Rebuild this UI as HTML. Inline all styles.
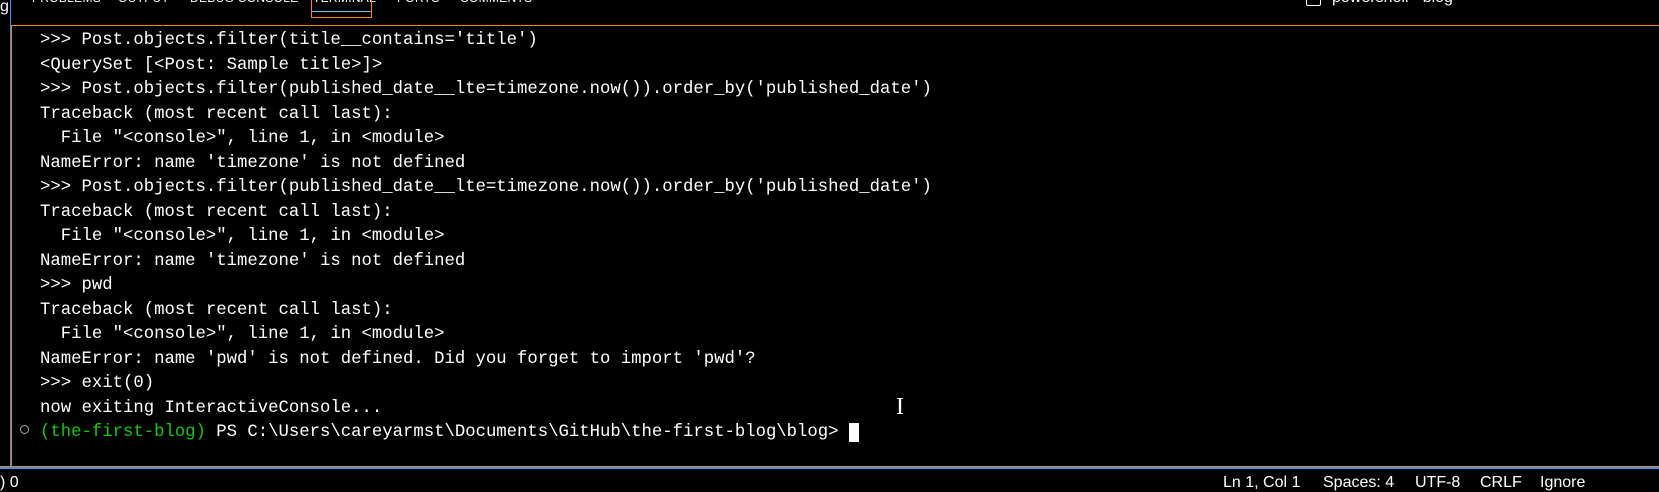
<!DOCTYPE html>
<html><head><style>
body{margin:0;width:1659px;height:484px;background:#000;overflow:hidden;position:relative;font-family:"Liberation Mono",monospace;}
.t{position:absolute;left:40px;top:29px;color:#fff;font-size:17.3px;line-height:24.5px;white-space:pre;}
.tab{position:absolute;top:-9px;color:#fff;font-family:"Liberation Sans",sans-serif;font-size:12px;letter-spacing:0.3px;}
.sb{position:absolute;top:474px;color:#fff;font-family:"Liberation Sans",sans-serif;font-size:16px;white-space:pre;}
</style></head><body>
<div class="tab" style="left:32px">PROBLEMS</div>
<div class="tab" style="left:118px">OUTPUT</div>
<div class="tab" style="left:190px">DEBUG CONSOLE</div>
<div class="tab" style="left:313px">TERMINAL</div>
<div class="tab" style="left:397px">PORTS</div>
<div class="tab" style="left:460px">COMMENTS</div>
<div style="position:absolute;left:1306px;top:-8px;width:13px;height:12px;border:1.5px solid #fff;border-radius:2px"></div>
<div class="tab" style="left:1332px;top:-11px;letter-spacing:0;font-size:16px">powershell - blog</div>
<div style="position:absolute;left:311px;top:0;width:61px;height:18px;border:1px solid #f38518;border-top:none;box-sizing:border-box"></div>
<div style="position:absolute;left:312px;top:11px;width:59px;height:1px;background:#75beff"></div>
<div style="position:absolute;left:0;top:0;font-family:'Liberation Sans';color:#fff;font-size:16px;line-height:14px">g</div>
<div style="position:absolute;left:10px;top:0;width:1px;height:466px;background:#3794ff"></div>
<div style="position:absolute;left:11px;top:25px;width:1px;height:441px;background:#f38518"></div>
<div style="position:absolute;left:11px;top:25px;width:1648px;height:1px;background:#f38518"></div>
<div style="position:absolute;left:0;top:466px;width:1659px;height:1px;background:#f38518"></div>
<div style="position:absolute;left:0;top:467px;width:1659px;height:2px;background:#3794ff"></div>
<div style="position:absolute;left:20px;top:425px;width:7px;height:7px;border:1.5px solid #aaa;border-radius:50%"></div>
<div class="t">&gt;&gt;&gt; Post.objects.filter(title__contains='title')
&lt;QuerySet [&lt;Post: Sample title&gt;]&gt;
&gt;&gt;&gt; Post.objects.filter(published_date__lte=timezone.now()).order_by('published_date')
Traceback (most recent call last):
  File "&lt;console&gt;", line 1, in &lt;module&gt;
NameError: name 'timezone' is not defined
&gt;&gt;&gt; Post.objects.filter(published_date__lte=timezone.now()).order_by('published_date')
Traceback (most recent call last):
  File "&lt;console&gt;", line 1, in &lt;module&gt;
NameError: name 'timezone' is not defined
&gt;&gt;&gt; pwd
Traceback (most recent call last):
  File "&lt;console&gt;", line 1, in &lt;module&gt;
NameError: name 'pwd' is not defined. Did you forget to import 'pwd'?
&gt;&gt;&gt; exit(0)
now exiting InteractiveConsole...
<span style="color:#16c60c">(the-first-blog)</span> PS C:\Users\careyarmst\Documents\GitHub\the-first-blog\blog&gt; <span style="background:#fff"> </span></div>
<div style="position:absolute;left:896px;top:394px;color:#fff;font-family:'Liberation Serif';font-size:24px">I</div>
<div class="sb" style="left:0">) 0</div>
<div class="sb" style="left:1223px">Ln 1, Col 1</div>
<div class="sb" style="left:1323px">Spaces: 4</div>
<div class="sb" style="left:1415px">UTF-8</div>
<div class="sb" style="left:1480px">CRLF</div>
<div class="sb" style="left:1540px">Ignore</div>
</body></html>
